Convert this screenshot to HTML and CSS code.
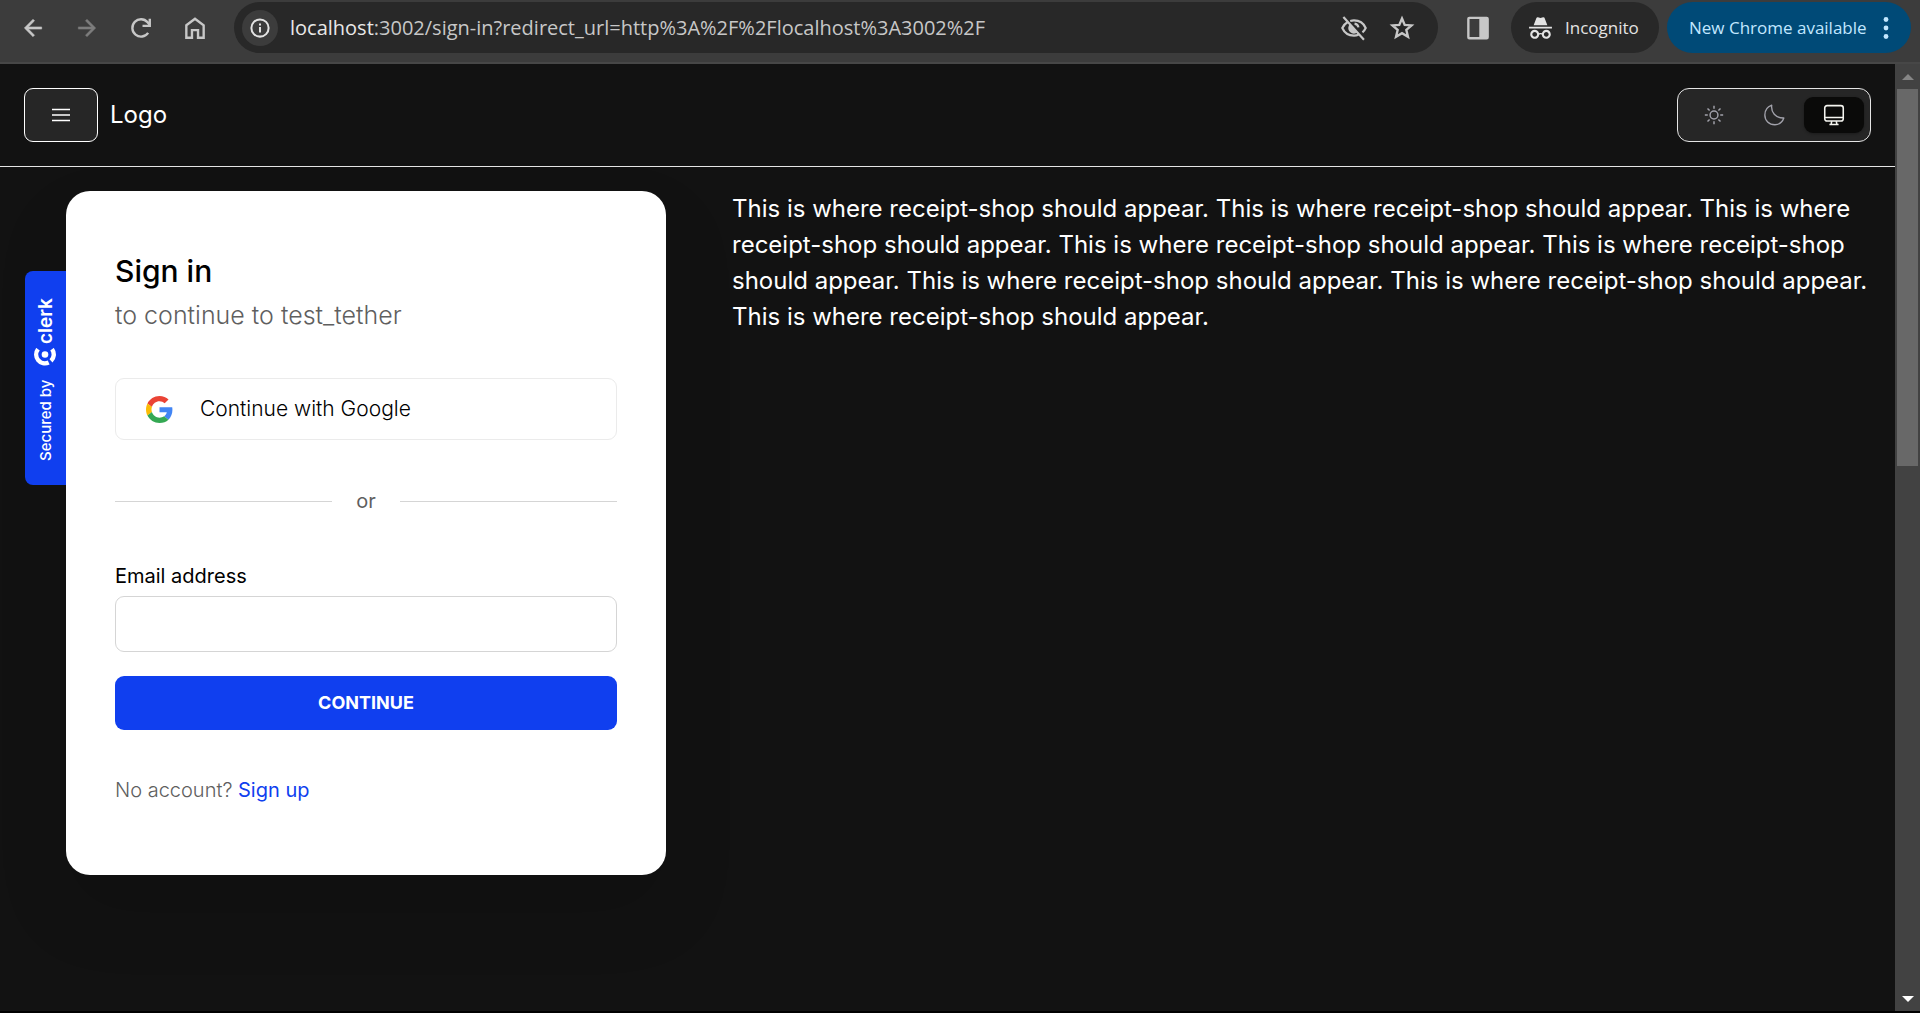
FILE: index.html
```html
<!DOCTYPE html>
<html lang="en">
<head>
<meta charset="utf-8">
<meta name="viewport" content="width=device-width, initial-scale=1">
<title>Sign in</title>
<link rel="stylesheet" href="styles.css">
</head>
<body>
<div class="toolbar">
  <nav class="nav-buttons" aria-label="Browser navigation">
    <button class="tool" aria-label="Back"><svg viewBox="0 0 24 24" fill="currentColor" stroke="currentColor" stroke-width=".5"><path d="M20 11H7.83l5.59-5.59L12 4l-8 8 8 8 1.41-1.41L7.83 13H20z"/></svg></button>
    <button class="tool tool-off" aria-label="Forward" disabled><svg viewBox="0 0 24 24" fill="currentColor" stroke="currentColor" stroke-width=".5"><path d="M12 4l-1.41 1.41L16.17 11H4v2h12.17l-5.58 5.59L12 20l8-8z"/></svg></button>
    <button class="tool" aria-label="Reload"><svg viewBox="0 0 24 24" fill="none" stroke="currentColor" stroke-width="2.2"><path d="M18.6 16.5A8 8 0 1 1 18 6.6L20 9"/><path d="M20.1 3.5V10H13.4"/></svg></button>
    <button class="tool" aria-label="Home"><svg viewBox="0 0 24 24" fill="none" stroke="currentColor" stroke-width="2.2"><path d="M4 9.5L12 3.4l8 6.1V21h-5.2v-7H9.200v7H4z"/></svg></button>
  </nav>
  <div class="address">
    <button class="info" aria-label="Site information"><svg viewBox="0 0 24 24" fill="none" stroke="currentColor" stroke-width="2.2"><circle cx="12" cy="12" r="9.4"/><path d="M12 11v6M12 7v2.200"/></svg></button>
    <span class="url"><b>localhost</b>:3002/sign-in?redirect_url=http%3A%2F%2Flocalhost%3A3002%2F</span>
    <button class="tool eye" aria-label="Third-party cookies blocked"><svg viewBox="0 0 24 24" fill="none" stroke="currentColor" stroke-width="2"><path d="M6.200 6.500C4 7.800 2.200 9.700 1.200 12c1.900 4.300 6 7 10.800 7 1.500 0 2.900-.3 4.200-.8M8.500 5.500C9.600 5.200 10.800 5 12 5c4.800 0 8.900 2.700 10.800 7-.7 1.600-1.700 2.900-3 4"/><path d="M8.200 10.200a4.200 4.200 0 0 0 5.600 5.600z" fill="currentColor"/><path d="M12.500 7.900a4.200 4.200 0 0 1 3.600 3.600"/><path d="M2.200 1.800l19 21"/></svg></button>
    <button class="tool" aria-label="Bookmark this tab"><svg viewBox="0 0 24 24" fill="none" stroke="currentColor" stroke-width="2.200"><path d="M12 3.200l2.500 5.900 6.300.5-4.800 4.200 1.500 6.300L12 16.800l-5.500 3.300L8 13.800 3.200 9.600l6.300-.5z"/></svg></button>
  </div>
  <button class="tool panel" aria-label="Side panel"><svg viewBox="0 0 24 24" fill="currentColor"><path fill-rule="evenodd" d="M4 1.500h16a2 2 0 0 1 2 2v17a2 2 0 0 1-2 2H4a2 2 0 0 1-2-2v-17a2 2 0 0 1 2-2zM4.200 3.700v16.600h9V3.700z"/></svg></button>
  <button class="incognito"><svg viewBox="2 1 20 21" fill="currentColor"><path d="M17.060 13c-1.860 0-3.420 1.330-3.820 3.100-.95-.41-1.820-.3-2.480-.01C10.350 14.310 8.790 13 6.940 13 4.770 13 3 14.790 3 17s1.770 4 3.940 4c2.060 0 3.740-1.620 3.900-3.680.34-.24 1.230-.69 2.320.02.18 2.050 1.840 3.660 3.900 3.660 2.170 0 3.940-1.790 3.940-4s-1.770-4-3.940-4M6.940 19.100c-1.150 0-2.080-.94-2.080-2.100s.93-2.100 2.080-2.100 2.080.94 2.080 2.100-.93 2.100-2.080 2.100m10.120 0c-1.150 0-2.080-.94-2.080-2.100s.93-2.100 2.080-2.100 2.080.94 2.080 2.100-.93 2.100-2.080 2.100M22 10.300H2V12h20zm-6.470-7.670c-.22-.49-.78-.75-1.310-.58L12 2.790l-2.230-.74-.05-.01c-.53-.15-1.090.13-1.290.64L6 9h12l-2.440-6.320z"/></svg>Incognito</button>
  <button class="update">New Chrome available<svg viewBox="0 0 6 24" fill="currentColor"><circle cx="3" cy="3.500" r="2.400"/><circle cx="3" cy="12" r="2.400"/><circle cx="3" cy="20.500" r="2.400"/></svg></button>
</div>

<div class="viewport">
  <div class="page">
    <header class="site-header">
      <button class="menu" aria-label="Menu"><svg viewBox="0 0 24 24" fill="none" stroke="currentColor" stroke-width="1.500"><path d="M3 6.500h18M3 12h18M3 17.500h18"/></svg></button>
      <span class="logo">Logo</span>
      <div class="themes">
        <button class="theme" aria-label="Light"><svg viewBox="0 0 24 24" fill="none" stroke="currentColor" stroke-width="1.600"><circle cx="12" cy="12" r="4.300"/><path d="M12 2v3.200M12 18.800V22M2 12h3.200M18.800 12H22M4.900 4.900l2.300 2.300M16.800 16.800l2.300 2.300M4.900 19.100l2.300-2.300M16.800 7.200l2.300-2.300"/></svg></button>
        <button class="theme" aria-label="Dark"><svg viewBox="0 0 24 24" fill="none" stroke="currentColor" stroke-width="1.500" stroke-linejoin="round"><path d="M9.500 1.300C8.500 9 13.500 15.500 22.700 15.300A11 11 0 0 1 13 22.700C6.500 22.700 2 18 2 12 2 7.300 5 3 9.500 1.300z"/></svg></button>
        <button class="theme theme-on" aria-label="System"><svg viewBox="0 0 24 24" fill="none" stroke="currentColor" stroke-width="1.700"><rect x="1.900" y="1.800" width="20.200" height="16.800" rx="2.500"/><path d="M1.900 14.800h20.200M9.500 18.600l-.6 3.700M14.500 18.600l.6 3.700M7 22.300h10"/></svg></button>
      </div>
    </header>
    <main class="content">
      <section class="sign-in">
        <a class="badge" href="#clerk"><span>Secured by</span><svg viewBox="0 0 22 18" fill="none" stroke="currentColor" stroke-width="4.400"><g transform="rotate(180 11 9)"><path d="M4 1.200A8.800 8.800 0 0 0 14.700 14.500"/><path d="M17 12.900A8.800 8.800 0 0 0 18 1.200"/><circle cx="11" cy="6.500" r="3.300" fill="currentColor" stroke="none"/></g></svg><span class="clerk">clerk</span></a>
        <form class="card" onsubmit="return false">
          <h1>Sign in</h1>
          <p class="subtitle">to continue to test_tether</p>
          <button class="google" type="button"><svg viewBox="0 0 48 48"><path fill="#ea4335" d="M24 9.500c3.540 0 6.710 1.220 9.210 3.600l6.850-6.850C35.900 2.380 30.470 0 24 0 14.620 0 6.510 5.380 2.560 13.220l7.980 6.190C12.430 13.720 17.740 9.500 24 9.500z"/><path fill="#4285f4" d="M46.980 24.550c0-1.570-.15-3.090-.38-4.550H24v9.020h12.940c-.58 2.960-2.260 5.480-4.780 7.180l7.730 6c4.510-4.180 7.090-10.360 7.090-17.650z"/><path fill="#fbbc05" d="M10.530 28.590c-.48-1.450-.76-2.990-.76-4.590s.27-3.140.76-4.590l-7.980-6.190C.92 16.460 0 20.120 0 24c0 3.880.92 7.540 2.560 10.780l7.970-6.190z"/><path fill="#34a853" d="M24 48c6.480 0 11.930-2.130 15.890-5.810l-7.730-6c-2.150 1.450-4.920 2.300-8.160 2.300-6.260 0-11.570-4.220-13.470-9.910l-7.980 6.190C6.510 42.620 14.620 48 24 48z"/></svg>Continue with Google</button>
          <div class="divider"><span>or</span></div>
          <label for="email">Email address</label>
          <input id="email" type="email">
          <button class="continue" type="submit">CONTINUE</button>
          <p class="no-account">No account? <a href="#sign-up">Sign up</a></p>
        </form>
      </section>
      <p class="text">This is where receipt-shop should appear. This is where receipt-shop should appear. This is where receipt-shop should appear. This is where receipt-shop should appear. This is where receipt-shop should appear. This is where receipt-shop should appear. This is where receipt-shop should appear. This is where receipt-shop should appear.</p>
    </main>
  </div>
  <div class="scrollbar" aria-hidden="true">
    <svg class="arrow arrow-up" viewBox="0 0 12 6"><path d="M6 0l6 6H0z"/></svg>
    <div class="track"><div class="thumb"></div></div>
    <svg class="arrow" viewBox="0 0 12 6"><path d="M0 0h12L6 6z"/></svg>
  </div>
</div>
</body>
</html>
```
FILE: styles.css
```css
* { box-sizing: border-box; }
body {
  margin: 0;
  height: 100vh;
  display: flex;
  flex-direction: column;
  background: #000;
  color: #fff;
  font: 24px/36px Inter, sans-serif;
}
h1, p { margin: 0; }
button, input { font: inherit; color: inherit; margin: 0; padding: 0; border: 0; background: none; }
svg { display: block; flex: none; }

.toolbar {
  flex: none;
  height: 64px;
  display: flex;
  align-items: flex-start;
  padding: 2px 9px 0 20px;
  background: #3c3c3c;
  border-bottom: 2px solid #474747;
  color: #c7c7c7;
  font: 17px/24px "Open Sans", sans-serif;
}
.nav-buttons { display: flex; gap: 28px; margin-right: 26px; }
.tool { width: 26px; height: 51px; display: flex; align-items: center; justify-content: center; }
.tool svg { width: 26px; height: 26px; }
.tool-off { color: #7d7d7d; }
.address {
  flex: 1;
  height: 51px;
  display: flex;
  align-items: center;
  gap: 22px;
  padding: 0 23px 0 8px;
  border-radius: 26px;
  background: #282828;
}
.info {
  width: 36px;
  height: 36px;
  display: grid;
  place-items: center;
  border-radius: 50%;
  background: #3c3c3c;
  color: #e3e3e3;
}
.info svg { width: 22px; height: 22px; }
.url { flex: 1; margin-left: -10px; font-size: 20px; white-space: nowrap; }
.url b { font-weight: 400; color: #e8e8e8; }
.panel { margin: 0 20px 0 27px; }
.incognito, .update { height: 51px; display: flex; align-items: center; border-radius: 26px; }
.incognito { width: 148px; gap: 13px; padding-left: 18px; margin-right: 8px; background: #282828; color: #e3e3e3; }
.incognito svg { width: 23px; height: 24px; }
.update { width: 244px; padding: 0 22px; justify-content: space-between; background: #004a77; color: #c2e7ff; }
.update svg { width: 6px; height: 24px; }

.viewport { flex: 1; display: flex; min-height: 0; margin-bottom: 2px; }
.page { flex: 1; min-width: 0; overflow: hidden; background: #121212; }
.site-header {
  display: flex;
  align-items: center;
  padding: 24px;
  border-bottom: 1px solid #e5e5e5;
}
.menu {
  width: 74px;
  height: 54px;
  display: grid;
  place-items: center;
  border: 1px solid #fff;
  border-radius: 9px;
  background: #262626;
}
.menu svg { width: 24px; height: 24px; }
.logo { margin-left: 12px; }
.themes {
  display: flex;
  margin-left: auto;
  padding: 8px 6px;
  border: 1px solid #e5e5e5;
  border-radius: 12px;
  background: #262626;
}
.theme { width: 60px; height: 36px; display: grid; place-items: center; border-radius: 9px; color: #a1a1aa; }
.theme svg { width: 22px; height: 22px; }
.theme-on { background: #0a0a09; color: #f5f5f0; box-shadow: 0 1px 3px rgba(0, 0, 0, .3); }

.content { display: flex; align-items: flex-start; gap: 66px; padding: 24px; }
.text { flex: 1; }
.sign-in { display: flex; align-items: flex-start; margin-left: 1px; }
.badge {
  width: 41px;
  height: 214px;
  margin-top: 80px;
  padding-top: 24px;
  display: flex;
  align-items: center;
  writing-mode: vertical-rl;
  transform: rotate(180deg);
  border-radius: 0 8px 8px 0;
  background: #103fef;
  color: #fff;
  font-size: 15px;
  line-height: 20px;
  font-weight: 500;
  text-decoration: none;
}
.badge svg { width: 22px; height: 18px; margin: 14px 0 4px; }
.clerk { font-size: 19px; font-weight: 600; }
.card {
  width: 600px;
  display: flex;
  flex-direction: column;
  padding: 62px 49px 71px;
  border-radius: 24px;
  background: #fff;
  color: #000;
  font-size: 20px;
  line-height: 28px;
  box-shadow: 0 36px 72px rgba(0, 0, 0, .12);
}
.card h1 { font-size: 30px; line-height: 36px; font-weight: 500; }
.subtitle { margin: 12px 0 49px; font-size: 25px; font-weight: 300; color: #5f5f5f; }
.google {
  height: 62px;
  display: flex;
  align-items: center;
  gap: 27px;
  padding-left: 30px;
  border: 1px solid #ebebeb;
  border-radius: 9px;
  font-size: 21px;
  font-weight: 300;
}
.google svg { width: 27px; height: 27px; }
.divider { display: flex; align-items: center; gap: 24px; margin: 48px 0 47px; line-height: 27px; color: #5f5f5f; }
.divider::before, .divider::after { content: ""; flex: 1; height: 1px; background: #d5d5d5; }
.card label { margin-bottom: 6px; }
.card input { height: 56px; padding: 0 18px; border: 1px solid #d5d5d5; border-radius: 9px; }
.continue {
  height: 54px;
  margin: 24px 0 46px;
  border-radius: 9px;
  background: #103fef;
  color: #fff;
  font-size: 18px;
  font-weight: 700;
}
.no-account { color: #5f5f5f; font-weight: 300; }
.no-account a { color: #103fef; font-weight: 400; text-decoration: none; }

.scrollbar {
  width: 25px;
  flex: none;
  display: flex;
  flex-direction: column;
  align-items: center;
  padding: 10px 2px 9px;
  background: #424242;
}
.arrow { width: 12px; height: 6px; fill: #fff; }
.arrow-up { fill: #868686; }
.track { flex: 1; width: 100%; padding: 9px 0; }
.thumb { height: 42%; background: #686868; }
```
